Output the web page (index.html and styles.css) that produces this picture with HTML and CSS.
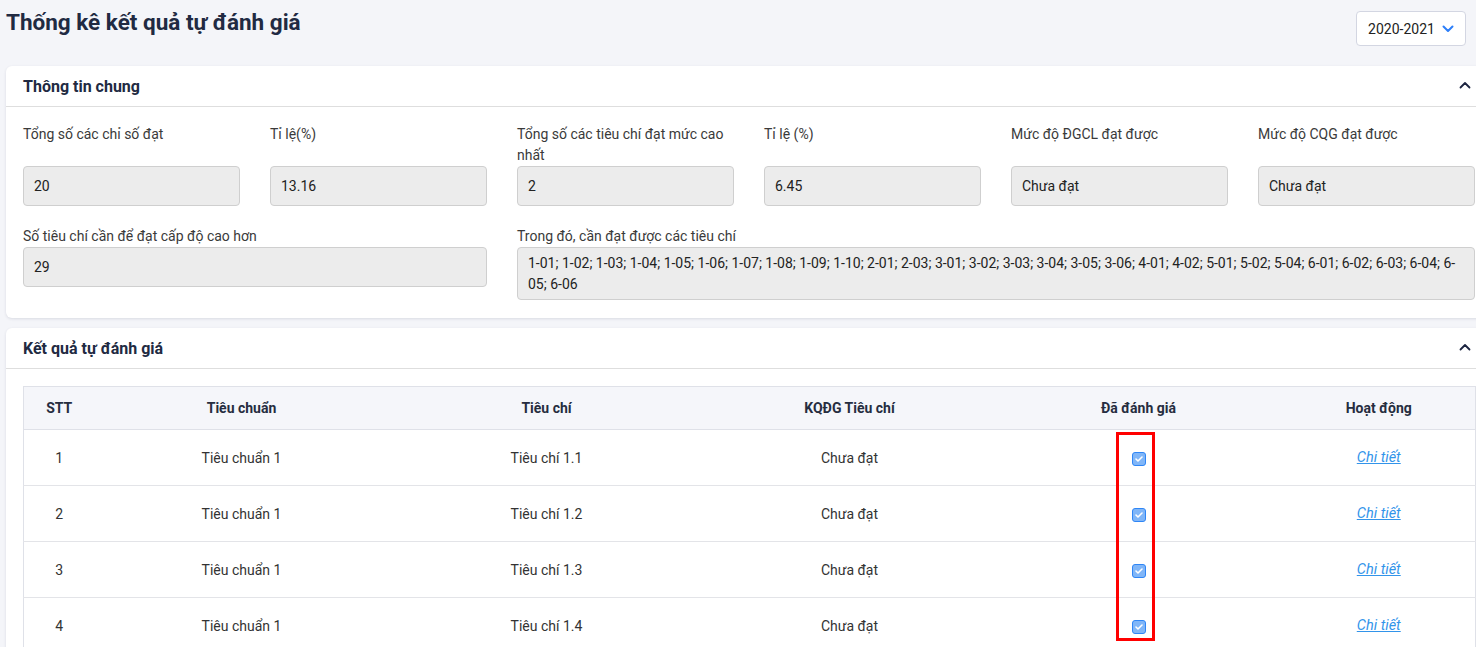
FILE: index.html
```html
<!DOCTYPE html>
<html lang="vi">
<head>
<meta charset="utf-8">
<title>Thống kê kết quả tự đánh giá</title>
<link rel="stylesheet" href="styles.css">
</head>
<body>
<div class="page">
  <div class="topbar">
    <h1 class="title">Thống kê kết quả tự đánh giá</h1>
    <div class="year-select">
      <span>2020-2021</span>
      <svg class="chev-down" width="12" height="8" viewBox="0 0 12 8"><polyline points="1.5,1.5 6,6 10.5,1.5" fill="none" stroke="#2d7ff9" stroke-width="2" stroke-linecap="round" stroke-linejoin="round"/></svg>
    </div>
  </div>

  <section class="card">
    <div class="card-head">
      <h2 class="card-title">Thông tin chung</h2>
      <svg class="chev-up" width="12" height="8" viewBox="0 0 12 8"><polyline points="1.5,6.5 6,2 10.5,6.5" fill="none" stroke="#1c2440" stroke-width="1.8" stroke-linecap="round" stroke-linejoin="round"/></svg>
    </div>
    <div class="card-body info-grid">
      <div class="field"><label>Tổng số các chỉ số đạt</label><div class="input">20</div></div>
      <div class="field"><label>Tỉ lệ(%)</label><div class="input">13.16</div></div>
      <div class="field"><label>Tổng số các tiêu chí đạt mức cao nhất</label><div class="input">2</div></div>
      <div class="field"><label>Tỉ lệ (%)</label><div class="input">6.45</div></div>
      <div class="field"><label>Mức độ ĐGCL đạt được</label><div class="input">Chưa đạt</div></div>
      <div class="field"><label>Mức độ CQG đạt được</label><div class="input">Chưa đạt</div></div>
      <div class="field span2 top"><label>Số tiêu chí cần để đạt cấp độ cao hơn</label><div class="input">29</div></div>
      <div class="field span4 top"><label>Trong đó, cần đạt được các tiêu chí</label><div class="input multi">1-01; 1-02; 1-03; 1-04; 1-05; 1-06; 1-07; 1-08; 1-09; 1-10; 2-01; 2-03; 3-01; 3-02; 3-03; 3-04; 3-05; 3-06; 4-01; 4-02; 5-01; 5-02; 5-04; 6-01; 6-02; 6-03; 6-04; 6-05; 6-06</div></div>
    </div>
  </section>

  <section class="card">
    <div class="card-head">
      <h2 class="card-title">Kết quả tự đánh giá</h2>
      <svg class="chev-up" width="12" height="8" viewBox="0 0 12 8"><polyline points="1.5,6.5 6,2 10.5,6.5" fill="none" stroke="#1c2440" stroke-width="1.8" stroke-linecap="round" stroke-linejoin="round"/></svg>
    </div>
    <div class="card-body">
      <div class="table-wrap">
        <table class="results">
          <colgroup>
            <col class="c-stt"><col class="c-tc"><col class="c-tchi"><col class="c-kq"><col class="c-dg"><col class="c-hd">
          </colgroup>
          <thead>
            <tr><th>STT</th><th>Tiêu chuẩn</th><th>Tiêu chí</th><th>KQĐG Tiêu chí</th><th>Đã đánh giá</th><th>Hoạt động</th></tr>
          </thead>
          <tbody>
            <tr><td>1</td><td>Tiêu chuẩn 1</td><td>Tiêu chí 1.1</td><td>Chưa đạt</td><td><span class="check"><svg width="8" height="6" viewBox="0 0 8 6"><polyline points="1,3 3,5 7,1" fill="none" stroke="#fff" stroke-width="1.6" stroke-linecap="round" stroke-linejoin="round"/></svg></span></td><td><a class="link" href="#">Chi tiết</a></td></tr>
            <tr><td>2</td><td>Tiêu chuẩn 1</td><td>Tiêu chí 1.2</td><td>Chưa đạt</td><td><span class="check"><svg width="8" height="6" viewBox="0 0 8 6"><polyline points="1,3 3,5 7,1" fill="none" stroke="#fff" stroke-width="1.6" stroke-linecap="round" stroke-linejoin="round"/></svg></span></td><td><a class="link" href="#">Chi tiết</a></td></tr>
            <tr><td>3</td><td>Tiêu chuẩn 1</td><td>Tiêu chí 1.3</td><td>Chưa đạt</td><td><span class="check"><svg width="8" height="6" viewBox="0 0 8 6"><polyline points="1,3 3,5 7,1" fill="none" stroke="#fff" stroke-width="1.6" stroke-linecap="round" stroke-linejoin="round"/></svg></span></td><td><a class="link" href="#">Chi tiết</a></td></tr>
            <tr><td>4</td><td>Tiêu chuẩn 1</td><td>Tiêu chí 1.4</td><td>Chưa đạt</td><td><span class="check"><svg width="8" height="6" viewBox="0 0 8 6"><polyline points="1,3 3,5 7,1" fill="none" stroke="#fff" stroke-width="1.6" stroke-linecap="round" stroke-linejoin="round"/></svg></span></td><td><a class="link" href="#">Chi tiết</a></td></tr>
          </tbody>
        </table>
        <div class="highlight"></div>
      </div>
    </div>
  </section>
</div>
</body>
</html>
```

FILE: styles.css
```css
html, body {
  margin: 0;
  padding: 0;
  overflow: hidden;
  background: #f4f5f9;
}
body {
  font-family: Roboto, "Noto Sans", "Liberation Sans", sans-serif;
  color: #333;
  font-size: 14px;
}
.page {
  padding-left: 6px;
  width: 1486px;
}
.topbar {
  width: 1460px;
  height: 66px;
  display: flex;
  justify-content: space-between;
  align-items: flex-start;
}
.title {
  margin: 8px 0 0 0;
  font-size: 22.5px;
  line-height: 28px;
  font-weight: 700;
  color: #212a42;
}
.year-select {
  margin-top: 11px;
  width: 110px;
  height: 35px;
  box-sizing: border-box;
  border: 1px solid #d3d6e2;
  border-radius: 4px;
  background: #fff;
  display: flex;
  align-items: center;
  justify-content: center;
  gap: 7px;
  font-size: 14px;
  color: #222;
}
.card {
  background: #fff;
  border-radius: 6px;
  box-shadow: 0 1px 3px rgba(30, 40, 70, 0.12);
  margin-bottom: 10px;
}
.card-head {
  height: 40px;
  border-bottom: 1px solid #dedede;
  display: flex;
  align-items: center;
  justify-content: space-between;
  padding: 0 21px 0 17px;
}
.card-title {
  margin: 0;
  font-size: 16px;
  font-weight: 700;
  color: #212a42;
}
.chev-up { margin-top: -2px; }
.card-body {
  padding: 17px 17px 18px 17px;
}
.info-grid {
  display: grid;
  grid-template-columns: repeat(6, 217px);
  column-gap: 30px;
  row-gap: 20px;
}
.field {
  display: flex;
  flex-direction: column;
}
.field label {
  line-height: 21px;
  font-size: 14px;
  color: #3a3a3a;
}
.field .input {
  margin-top: auto;
  height: 40px;
  box-sizing: border-box;
  border: 1px solid #cfcfcf;
  border-radius: 4px;
  background: #ececec;
  padding: 0 10px;
  display: flex;
  align-items: center;
  color: #222;
  font-size: 14px;
}
.field.top .input { margin-top: 0; }
.field .input.multi {
  height: 53px;
  display: block;
  padding: 5px 10px 5px 10px;
  line-height: 21px;
}
.span2 { grid-column: span 2; }
.span4 { grid-column: span 4; }
.field.span2 { align-self: start; }

.card-body.info-grid { padding-bottom: 18px; }
.info-grid .field.top { margin-top: 0; }

.table-wrap {
  position: relative;
  width: 1452px;
}
.results {
  width: 1452px;
  border-collapse: collapse;
  table-layout: fixed;
  border: 1px solid #dfe1e8;
}
.c-stt { width: 71px; }
.c-tc { width: 294px; }
.c-tchi { width: 316px; }
.c-kq { width: 290px; }
.c-dg { width: 288px; }
.c-hd { width: 193px; }
.results th {
  height: 42px;
  background: #f5f6fa;
  font-weight: 700;
  font-size: 14px;
  color: #262d40;
  text-align: center;
  border-bottom: 1px solid #dfe1e8;
  padding: 0;
}
.results td {
  height: 55px;
  text-align: center;
  border-bottom: 1px solid #e3e4e8;
  padding: 0;
  color: #333;
  font-size: 14px;
}
.check {
  display: inline-flex;
  align-items: center;
  justify-content: center;
  width: 14px;
  height: 14px;
  box-sizing: border-box;
  border: 1px solid #2f86f6;
  border-radius: 3px;
  background: #80b6f8;
  vertical-align: middle;
}
.link {
  color: #3294ea;
  font-style: italic;
  text-decoration: underline;
  font-size: 14.5px;
}
.highlight {
  position: absolute;
  left: 1093px;
  top: 46px;
  width: 39px;
  height: 209px;
  box-sizing: border-box;
  border: 3px solid #ff0000;
  pointer-events: none;
}
```
